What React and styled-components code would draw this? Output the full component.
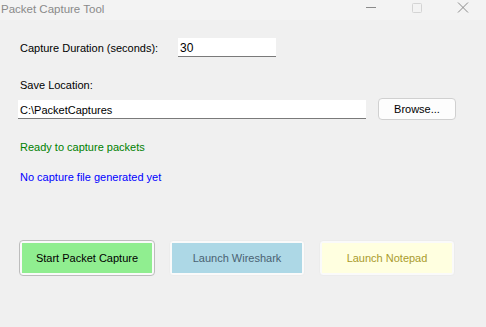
import styled, { createGlobalStyle } from "styled-components";

const GlobalStyle = createGlobalStyle`
    html, body {
        margin: 0;
        padding: 0;
        background: #f0f0f0;
    }
    body {
        font-family: "Liberation Sans", Arial, sans-serif;
        font-size: 11px;
        color: #000;
    }
`;

const Window = styled.div`
    width: 486px;
    height: 327px;
    display: flex;
    flex-direction: column;
    background: #f0f0f0;
    overflow: hidden;
`;

const TitleBar = styled.div`
    height: 20px;
    display: flex;
    align-items: center;
    background: #f3f3f3;
    padding-left: 1px;
`;

const Title = styled.span`
    flex: 1;
    font-size: 11.5px;
    color: #8a8a8a;
    margin-top: -3px;
`;

const Controls = styled.div`
    display: flex;
    height: 100%;
`;

const ControlBtn = styled.div`
    width: 46px;
    height: 100%;
    display: flex;
    justify-content: center;
    align-items: flex-start;
    padding-top: 2px;
    box-sizing: border-box;
`;

const Body = styled.div`
    display: flex;
    flex-direction: column;
    padding: 0 18px;
`;

const Row = styled.div`
    display: flex;
    align-items: center;
    margin-top: ${(p) => p.$top}px;
`;

const Label = styled.div`
    width: ${(p) => (p.$width ? `${p.$width}px` : "auto")};
    margin-left: 2px;
    line-height: 14px;
    margin-top: ${(p) => p.$top || 0}px;
`;

const TextBox = styled.div`
    width: ${(p) => p.$width}px;
    height: 19px;
    box-sizing: border-box;
    background: #fff;
    border-bottom: 1px solid #7a7a7a;
    padding: 3px 2px 0;
    line-height: 14px;
    font-size: ${(p) => p.$size || 11}px;
`;

const BrowseButton = styled.button`
    margin-left: 12px;
    width: 78px;
    height: 22px;
    border: 1px solid #d0d0d0;
    border-radius: 4px;
    background: #fdfdfd;
    font-family: inherit;
    font-size: 11px;
    color: #000;
    padding: 0;
`;

const Status = styled.div`
    margin-left: 2px;
    line-height: 14px;
    margin-top: ${(p) => p.$top}px;
    color: ${(p) => p.$color};
`;

const ButtonRow = styled.div`
    display: flex;
    gap: 14px;
    margin-top: 56px;
    margin-left: 1px;
`;

const ActionButton = styled.button`
    width: 136px;
    height: 36px;
    padding: 2px;
    box-sizing: border-box;
    border: 1px solid ${(p) => p.$border};
    border-radius: 4px;
    background: #fafafa;
    font-family: inherit;
    font-size: 11px;
    display: flex;
`;

const Fill = styled.span`
    flex: 1;
    display: flex;
    align-items: center;
    justify-content: center;
    background: ${(p) => p.$bg};
    color: ${(p) => p.$color};
`;

const App = () => {
    return (
        <>
        <GlobalStyle />
        <Window>
            <TitleBar>
                <Title>Packet Capture Tool</Title>
                <Controls>
                    <ControlBtn>
                        <svg width="12" height="12" viewBox="0 0 12 12">
                            <line x1="1" y1="5.5" x2="11" y2="5.5" stroke="#8a8a8a" strokeWidth="1" />
                        </svg>
                    </ControlBtn>
                    <ControlBtn>
                        <svg width="12" height="12" viewBox="0 0 12 12">
                            <rect x="1.5" y="1.5" width="9" height="9" rx="1" fill="none" stroke="#d4d4d4" strokeWidth="1" />
                        </svg>
                    </ControlBtn>
                    <ControlBtn>
                        <svg width="12" height="12" viewBox="0 0 12 12">
                            <path d="M1 0.5 L11 10.5 M11 0.5 L1 10.5" stroke="#8a8a8a" strokeWidth="1" />
                        </svg>
                    </ControlBtn>
                </Controls>
            </TitleBar>
            <Body>
                <Row $top={18}>
                    <Label $width={158}>Capture Duration (seconds):</Label>
                    <TextBox $width={98} $size={12}>30</TextBox>
                </Row>
                <Label $top={21}>Save Location:</Label>
                <Row $top={6}>
                    <TextBox $width={348}>C:\PacketCaptures</TextBox>
                    <BrowseButton>Browse...</BrowseButton>
                </Row>
                <Status $top={20} $color="#008000">Ready to capture packets</Status>
                <Status $top={16} $color="#0000ff">No capture file generated yet</Status>
                <ButtonRow>
                    <ActionButton $border="#bdbdbd">
                        <Fill $bg="#90ee90" $color="#000">Start Packet Capture</Fill>
                    </ActionButton>
                    <ActionButton $border="#ececec">
                        <Fill $bg="#add8e6" $color="#4a6272">Launch Wireshark</Fill>
                    </ActionButton>
                    <ActionButton $border="#ececec">
                        <Fill $bg="#ffffe0" $color="#a99b2c">Launch Notepad</Fill>
                    </ActionButton>
                </ButtonRow>
            </Body>
        </Window>
        </>
    );
};

export default App;
